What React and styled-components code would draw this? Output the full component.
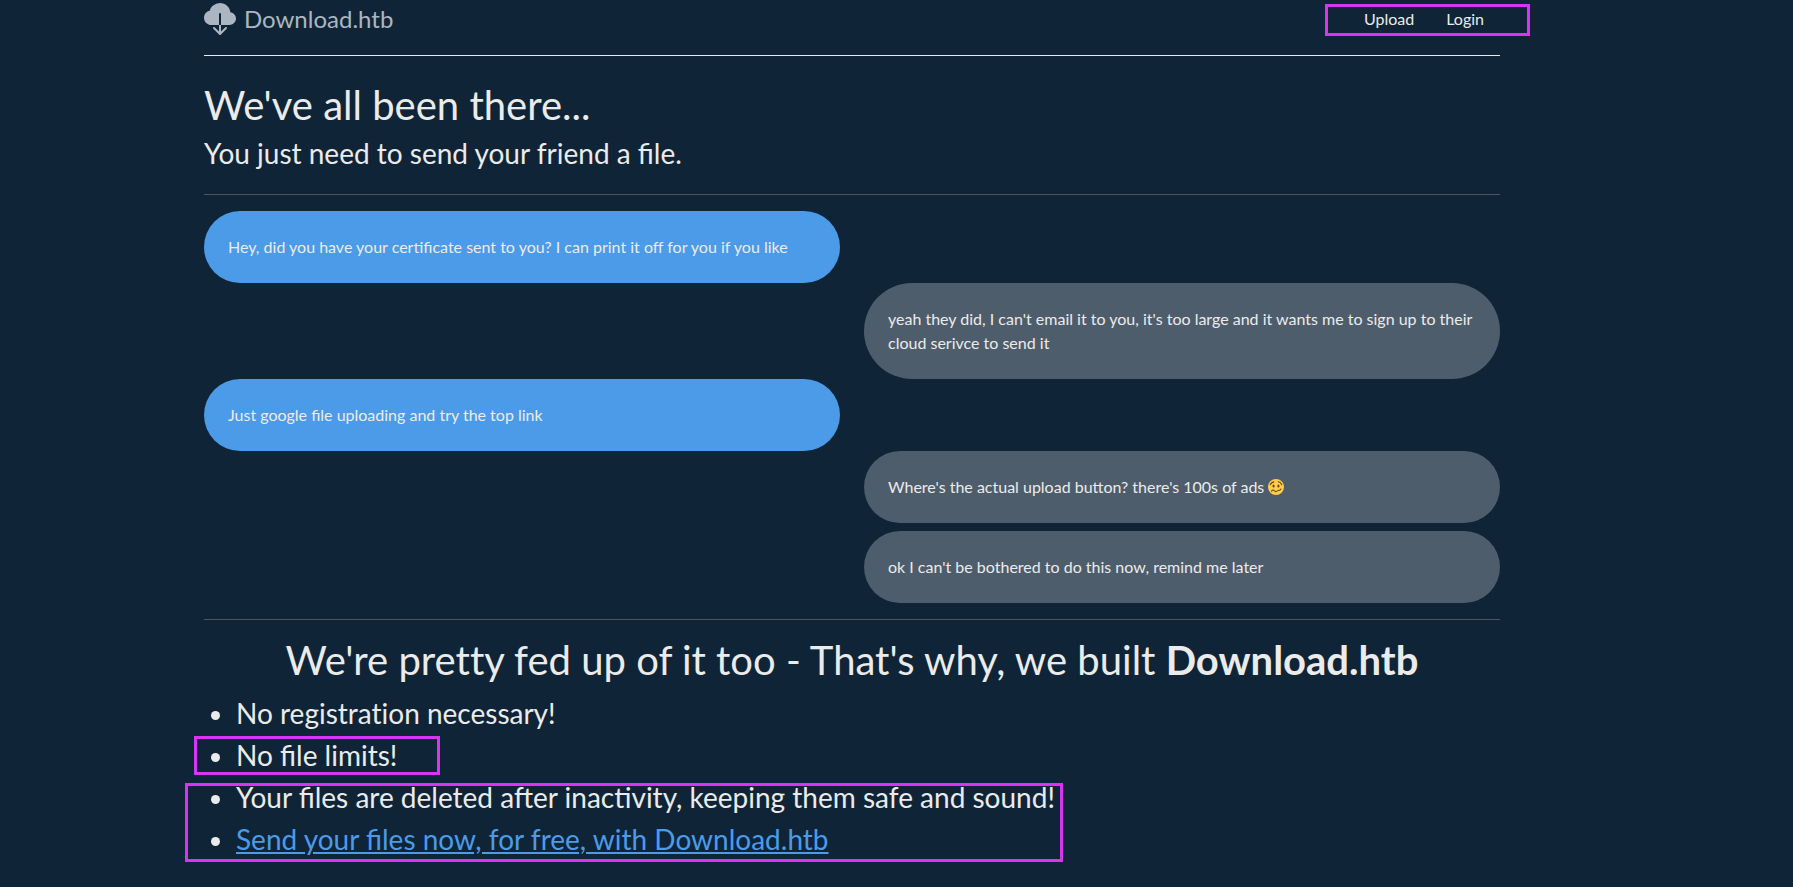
import React from "react";
import styled, { createGlobalStyle } from "styled-components";
import { BsCloudDownloadFill } from "react-icons/bs";

const GlobalStyle = createGlobalStyle`
  *, *::before, *::after { box-sizing: border-box; }
  body {
    margin: 0;
    padding-right: 89px;
    background: #0f2537;
    color: #ebebeb;
    font-family: Lato, "Open Sans", sans-serif;
    font-size: 16px;
    line-height: 24px;
  }
`;

const Page = styled.div`
  max-width: 1320px;
  margin: 0 auto;
  padding: 0 12px 24px;
`;

const Header = styled.header`
  display: flex;
  justify-content: space-between;
  align-items: center;
  padding-bottom: 17px;
  margin-bottom: 25px;
  border-bottom: 1px solid #ebebeb;
`;

const Brand = styled.a`
  display: flex;
  align-items: center;
  gap: 8px;
  color: #abb6c2;
  font-size: 24px;
  line-height: 36px;
  text-decoration: none;
`;

const Nav = styled.nav`
  position: relative;
  display: flex;
`;

const NavLink = styled.a`
  padding: 7px 16px;
  color: #ebebeb;
  text-decoration: none;
`;

const Highlight = styled.span`
  position: absolute;
  top: ${(p) => p.$top}px;
  left: ${(p) => p.$left}px;
  width: ${(p) => p.$width}px;
  height: ${(p) => p.$height}px;
  border: 3px solid #d933f5;
  pointer-events: none;
`;

const Title = styled.h1`
  margin: 0 0 8px;
  font-size: 40px;
  font-weight: 400;
  line-height: 48px;
  font-variant-ligatures: none;
  text-align: ${(p) => (p.$centered ? "center" : "left")};
`;

const Subtitle = styled.h2`
  margin: 0 0 24px;
  font-size: 28px;
  font-weight: 400;
  line-height: 33px;
`;

const Divider = styled.hr`
  margin: 16px 0;
  border: 0;
  border-top: 1px solid #ebebeb;
  opacity: 0.25;
`;

const Chat = styled.div`
  display: flex;
  flex-direction: column;
`;

const Bubble = styled.p`
  width: calc(50% - 12px);
  margin: 0;
  padding: 24px;
  border-radius: 48px;
  align-self: ${(p) => (p.$mine ? "flex-end" : "flex-start")};
  background: ${(p) => (p.$mine ? "#4e5d6c" : "#4c9be8")};
`;

const Replies = styled.div`
  display: flex;
  flex-direction: column;
  gap: 8px;
`;

const Emoji = styled.svg`
  width: 16px;
  height: 16px;
  vertical-align: -2px;
`;

const Features = styled.ul`
  margin: 0;
  padding-left: 32px;
  font-size: 28px;
  line-height: 42px;
`;

const Feature = styled.li`
  position: relative;
  font-variant-ligatures: ${(p) => (p.$plain ? "none" : "normal")};
`;

const SendLink = styled.a`
  color: #4c9be8;
`;

function WoozyFace() {
  return (
    <Emoji viewBox="0 0 36 36" role="img" aria-label="woozy face">
      <circle cx="18" cy="18" r="18" fill="#ffcc4d" />
      <ellipse cx="12.5" cy="15.5" rx="2.4" ry="3.4" fill="#664500" />
      <ellipse cx="23.5" cy="15.5" rx="2.4" ry="3.4" fill="#664500" />
      <g fill="none" stroke="#664500" strokeWidth="2.4" strokeLinecap="round">
        <path d="M5 13C6.500 9.500 9 7.500 13 6.500" />
        <path d="M23 6C27 6.500 29.500 9 31 13" />
        <path d="M8 27.500C9.500 24 12.500 24 14.500 26.500S19 29 21 26.500S26 28.500 29 22.500" />
      </g>
    </Emoji>
  );
}

export default function App() {
  return (
    <>
      <GlobalStyle />
      <Page>
        <Header>
          <Brand href="#">
            <BsCloudDownloadFill size={32} aria-hidden="true" />
            Download.htb
          </Brand>
          <Nav>
            <NavLink href="#upload">Upload</NavLink>
            <NavLink href="#login">Login</NavLink>
            <Highlight $top={4} $left={-23} $width={205} $height={32} />
          </Nav>
        </Header>

        <main>
          <Title>We've all been there...</Title>
          <Subtitle>You just need to send your friend a file.</Subtitle>
          <Divider />

          <Chat>
            <Bubble>
              Hey, did you have your certificate sent to you? I can print it off for you if you like
            </Bubble>
            <Bubble $mine>
              yeah they did, I can't email it to you, it's too large and it wants me to sign up to
              their cloud serivce to send it
            </Bubble>
            <Bubble>Just google file uploading and try the top link</Bubble>
            <Replies>
              <Bubble $mine>
                Where's the actual upload button? there's 100s of ads <WoozyFace />
              </Bubble>
              <Bubble $mine>ok I can't be bothered to do this now, remind me later</Bubble>
            </Replies>
          </Chat>
          <Divider />

          <Title $centered>
            We're pretty fed up of it too - That's why, we built <strong>Download.htb</strong>
          </Title>
          <Features>
            <Feature $plain>No registration necessary!</Feature>
            <Feature>
              No file limits!
              <Highlight $top={2} $left={-42} $width={246} $height={39} />
            </Feature>
            <Feature>
              Your files are deleted after inactivity, keeping them safe and sound!
              <Highlight $top={7} $left={-51} $width={878} $height={79} />
            </Feature>
            <Feature>
              <SendLink href="#upload">Send your files now, for free, with Download.htb</SendLink>
            </Feature>
          </Features>
        </main>
      </Page>
    </>
  );
}
